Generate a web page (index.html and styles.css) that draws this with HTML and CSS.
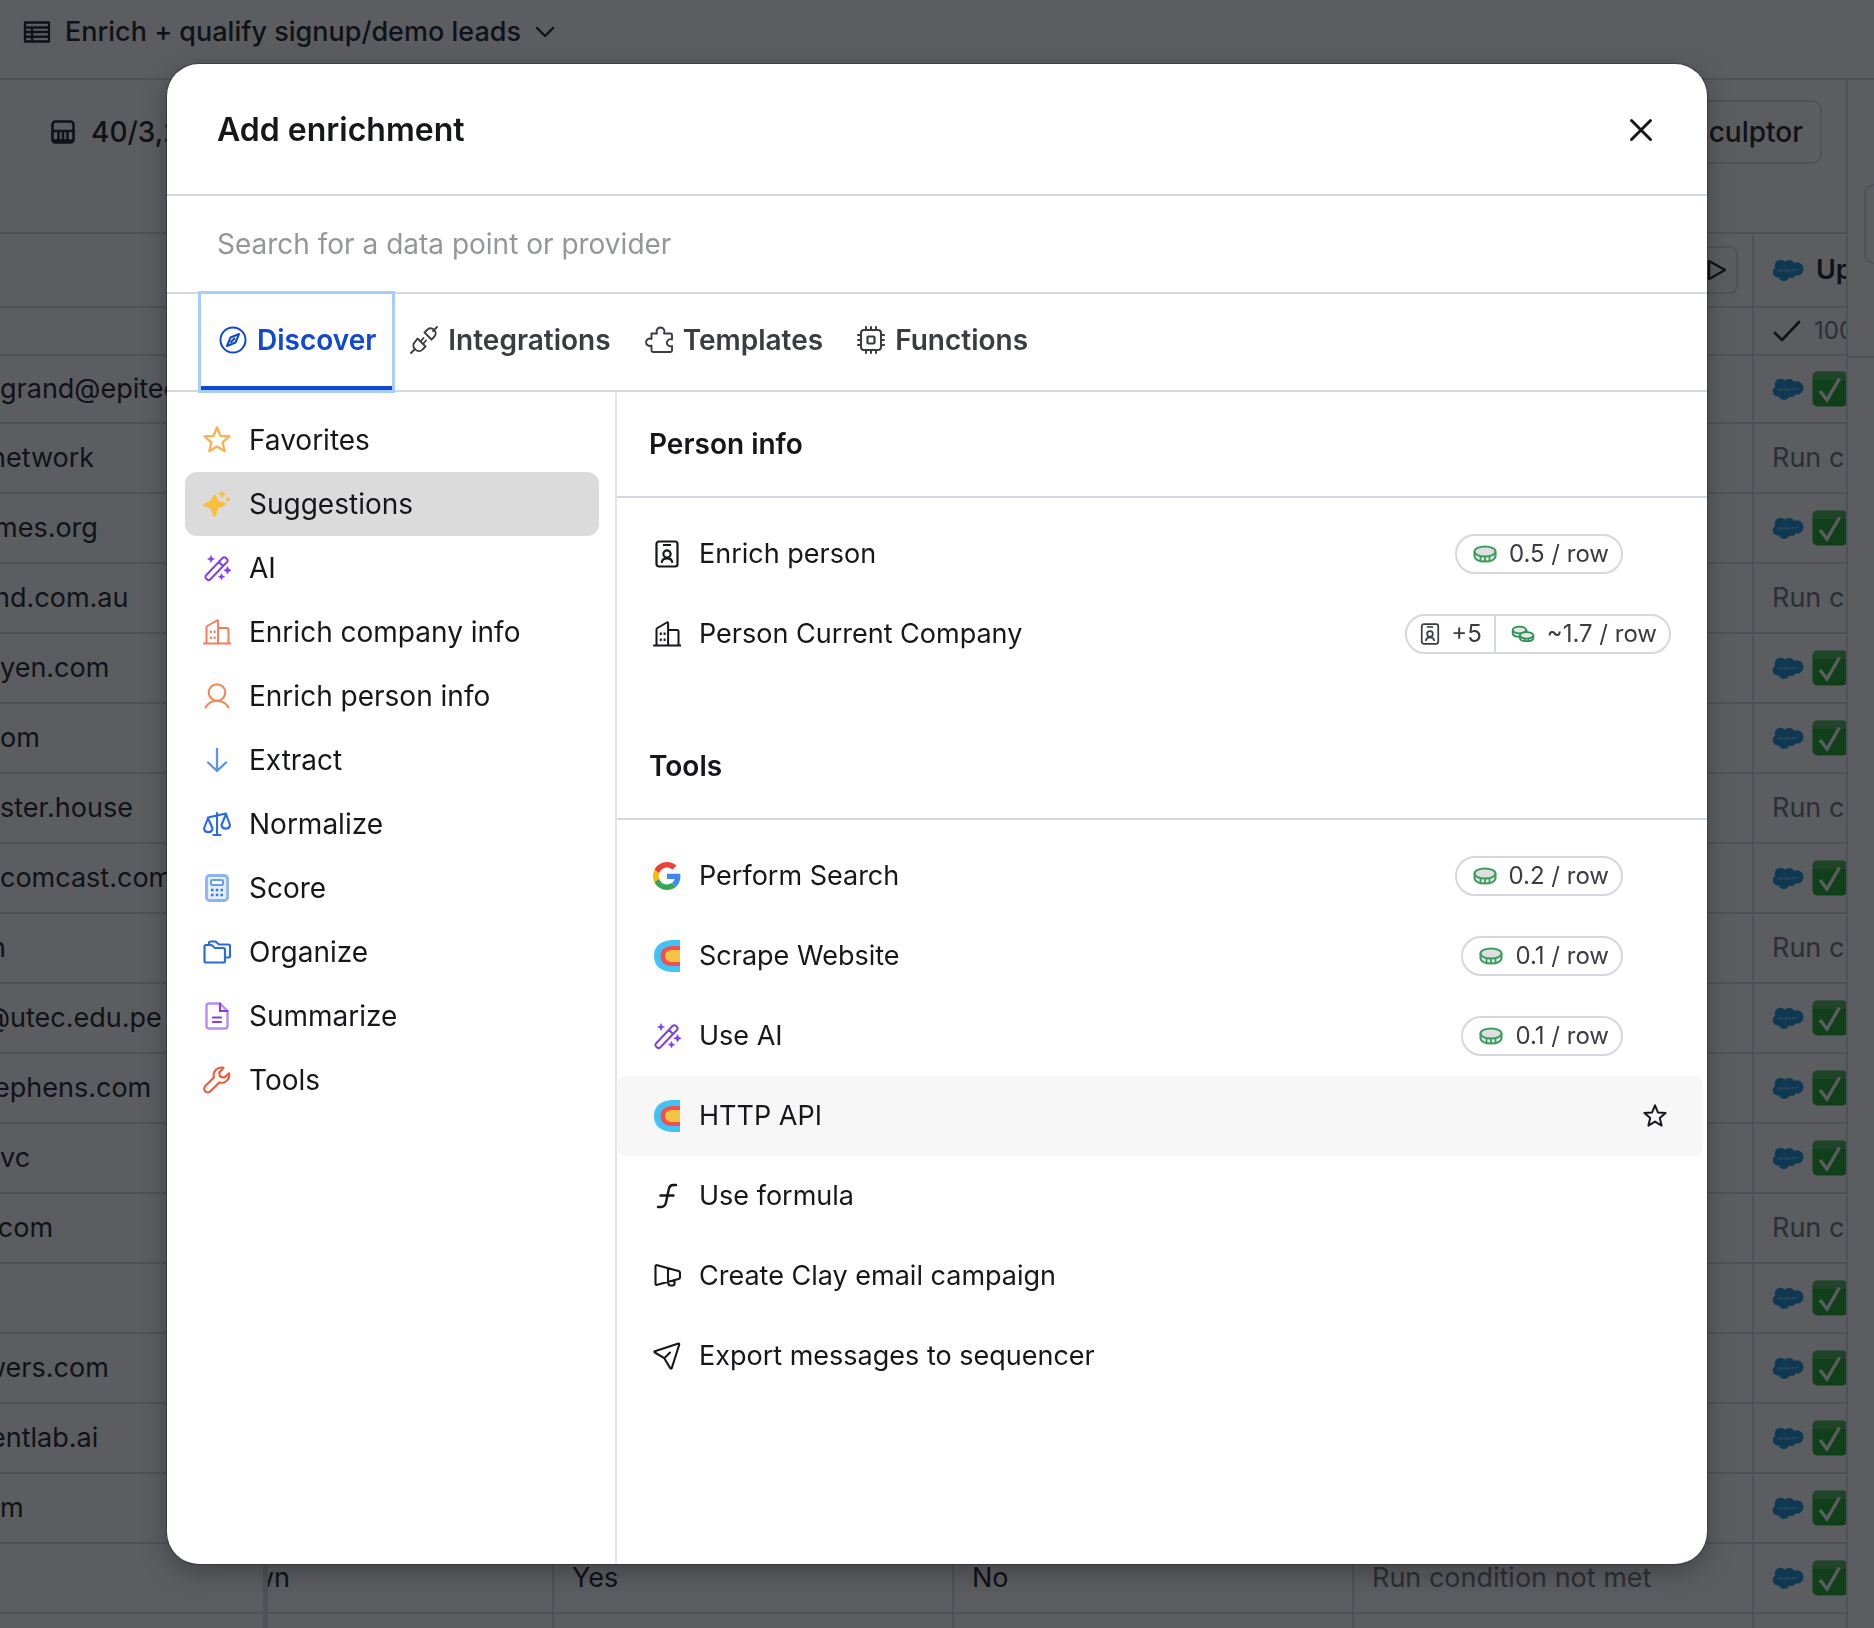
FILE: index.html
```html
<!DOCTYPE html>
<html lang="en">
<head>
<meta charset="utf-8">
<meta name="viewport" content="width=device-width, initial-scale=1">
<title>Add enrichment</title>
<link rel="stylesheet" href="styles.css">
</head>
<body>
<svg class="sprite" aria-hidden="true">
  <symbol id="i-table" viewBox="0 0 28 28"><path d="M2 4.500h24v19H2zM2 9.500h24M2 14h24M2 18.800h24M9 9.500v14" fill="none" stroke="currentColor" stroke-width="2.400" stroke-linejoin="round"/></symbol>
  <symbol id="i-meter" viewBox="0 0 24 24"><rect x="1.500" y="1.500" width="21" height="21" rx="3" fill="none" stroke="currentColor" stroke-width="2.600"/><path d="M1.500 11h21M7.500 11v11M12 11v11M16.500 11v11M2 20.500h20" fill="none" stroke="currentColor" stroke-width="2.600"/></symbol>
  <symbol id="i-chevron" viewBox="0 0 20 20"><path d="M2 6l8 8 8-8" fill="none" stroke="currentColor" stroke-width="2.400" stroke-linecap="round" stroke-linejoin="round"/></symbol>
  <symbol id="i-play" viewBox="0 0 24 24"><path d="M5 3v18l16-9z" fill="none" stroke="currentColor" stroke-width="2.400" stroke-linejoin="round"/></symbol>
  <symbol id="i-check" viewBox="0 0 28 24"><path d="M2 14l7 7L26 3" fill="none" stroke="currentColor" stroke-width="2.600" stroke-linecap="round" stroke-linejoin="round"/></symbol>
  <symbol id="i-cloud" viewBox="0 0 32 23"><path d="M13.300 2.600C14.300 1.500 15.800.9 17.300.9c2.100 0 3.900 1.200 4.900 2.900.8-.4 1.800-.6 2.700-.6 3.700 0 6.600 3 6.600 6.700s-3 6.700-6.600 6.700c-.5 0-.9 0-1.300-.1-.8 1.500-2.500 2.600-4.300 2.600-.8 0-1.500-.2-2.100-.5-.8 2-2.800 3.400-5.100 3.400-2.400 0-4.400-1.500-5.200-3.600-.3.100-.7.100-1.100.1C3 18.500.7 16.100.7 13.300c0-1.900 1-3.600 2.600-4.500-.3-.7-.5-1.500-.5-2.400C2.800 3.200 5.400.7 8.600.7c1.900 0 3.600.8 4.700 1.900z" fill="#1590cf"/><path d="M5 12.500l2-2 1 2.500 2-3 1.500 3M14 9l-1 4 3-2.500 1 2.500 2-3M20 13l1.500-3.500L23 12l2-2 1.500 1" fill="none" stroke="#8ccdf0" stroke-width=".8"/></symbol>
  <symbol id="i-done" viewBox="0 0 36 36"><rect x=".5" y=".5" width="35" height="35" rx="5" fill="#18a422"/><path d="M5.500 1h25q4 0 4.500 4v4H1V5q.5-4 4.500-4z" fill="#49b250"/><path d="M8 20l7 9L27.500 7.500" fill="none" stroke="#fff" stroke-width="3.400"/></symbol>
  <symbol id="i-close" viewBox="0 0 24 24"><path d="M2.500 2.500l19 19M21.500 2.500l-19 19" fill="none" stroke="currentColor" stroke-width="3" stroke-linecap="round"/></symbol>
  <symbol id="i-compass" viewBox="0 0 28 28"><circle cx="14" cy="14" r="12.500" fill="none" stroke="currentColor" stroke-width="2"/><path d="M20 8l-3.500 8.500L8 20l3.500-8.500zM11.500 16.500l4.500-4.500" fill="none" stroke="currentColor" stroke-width="2" stroke-linejoin="round"/></symbol>
  <symbol id="i-plug" viewBox="0 0 28 28"><path d="M1 27l4-4M23 5l4-4M7.500 12.500l8 8-3 3a4.500 4.500 0 01-7 0l-.5-.5a4.500 4.500 0 010-7zM14.500 6.500l7 7 3-3a5 5 0 00-7-7zM10.500 15.500l3-3.500M13 18l3-3.500" fill="none" stroke="currentColor" stroke-width="1.800" stroke-linecap="round" stroke-linejoin="round"/></symbol>
  <symbol id="i-puzzle" viewBox="0 0 28 28"><path d="M6.500 7.500h5.500a4 4 0 11 7 0h6.500a1.500 1.500 0 011.500 1.500v4.500a3.600 3.600 0 100 6.500v4.500a1.500 1.500 0 01-1.500 1.500H8a1.500 1.500 0 01-1.500-1.500V19.500a3.700 3.700 0 11 0-6.500z" fill="none" stroke="currentColor" stroke-width="1.900" stroke-linejoin="round"/></symbol>
  <symbol id="i-chip" viewBox="0 0 28 28"><rect x="4" y="4" width="20" height="20" rx="3" fill="none" stroke="currentColor" stroke-width="2"/><rect x="10.500" y="10.500" width="7" height="7" rx="1" fill="none" stroke="currentColor" stroke-width="2.200"/><path d="M9 1v3M14 1v3M19 1v3M9 24v3M14 24v3M19 24v3M1 9h3M1 14h3M1 19h3M24 9h3M24 14h3M24 19h3" stroke="currentColor" stroke-width="2" stroke-linecap="round"/></symbol>
  <symbol id="i-star" viewBox="0 0 28 28"><path d="M14 1.500l3.400 8.300 9 .7-6.800 5.900 2.100 8.800-7.700-4.700-7.700 4.700 2.100-8.800-6.800-5.900 9-.7z" fill="none" stroke="currentColor" stroke-width="2.300" stroke-linejoin="round"/></symbol>
  <symbol id="i-sparkle" viewBox="0 0 28 28"><path d="M11.500 4.500c.8 0 1.300.4 1.600 1.200l2 4.800 6.800 2.500q2 1.400 0 2.800l-6.800 2.600-2 7q-1.600 3.200-3.200 0l-2.400-7L1 15.900q-2-1.200 0-2.500l6.500-2.700 2.400-5c.3-.8.800-1.200 1.600-1.200zM19 .3l1.400 2.500 2.700 1.300-2.700 1.400L19 8.200l-1.400-2.700-2.700-1.400 2.700-1.300zM25 6.300l1.100 2 2.100 1.100-2.100 1.100-1.100 2.200-1.100-2.200-2.100-1.100 2.100-1.100z" fill="currentColor"/></symbol>
  <symbol id="i-wand" viewBox="0 0 28 28"><g fill="none" stroke="currentColor" stroke-width="2" stroke-linejoin="round" stroke-linecap="round"><path d="M3 21.500L19.500 4a2.500 2.500 0 013.600 0l.7.700a2.500 2.500 0 010 3.500L7.400 25.300a2.500 2.500 0 01-3.500 0l-.9-.9a2 2 0 010-2.900zM16 8l4 4"/></g><path d="M8 1.500l1.100 2.400L11.500 5 9.100 6.100 8 8.500 6.900 6.100 4.500 5l2.400-1.100zM24.500 12.500l1.200 2.600 2.600 1.200-2.600 1.200-1.200 2.600-1.200-2.600-2.600-1.200 2.600-1.200zM18.500 19.500l1 2.200 2.200 1-2.200 1-1 2.200-1-2.200-2.200-1 2.200-1z" fill="currentColor" stroke="currentColor" stroke-width=".5"/></symbol>
  <symbol id="i-building" viewBox="0 0 28 28"><path d="M1 25.500h27M3.500 25V9.500q0-1 .9-1.500l9.500-5.500q1.200-.5 1.200.7V25M15 10h9q1.500 0 1.500 1.500V25" fill="none" stroke="currentColor" stroke-width="2" stroke-linecap="round" stroke-linejoin="round"/><path d="M6.800 12.500h2v2.500h-2zM10.600 12.500h2v2.500h-2zM6.800 18.500h2v2.500h-2zM10.600 18.500h2v2.500h-2z" fill="currentColor"/></symbol>
  <symbol id="i-person" viewBox="0 0 28 28"><circle cx="14" cy="10.500" r="8.300" fill="none" stroke="currentColor" stroke-width="2.100"/><path d="M2.500 25.500q4-6.800 11.500-6.800t11.500 6.800" fill="none" stroke="currentColor" stroke-width="2.100" stroke-linecap="round"/></symbol>
  <symbol id="i-down" viewBox="0 0 28 28"><path d="M14 3v22M5 16.500l9 8.500 9-8.500" fill="none" stroke="currentColor" stroke-width="2.300" stroke-linecap="round" stroke-linejoin="round"/></symbol>
  <symbol id="i-scale" viewBox="0 0 28 28"><path d="M14 3v22M10.500 25h7M5 7.500l18-4M1 18.500L5 8l4.500 10.500a4.300 4.300 0 01-8.500 0zM18.500 15L23 4l4 11a4.300 4.300 0 01-8.500 0z" fill="none" stroke="currentColor" stroke-width="2.100" stroke-linecap="round" stroke-linejoin="round"/></symbol>
  <symbol id="i-calc" viewBox="0 0 28 28"><rect x="3.500" y="1.500" width="21" height="25" rx="3" fill="#e6effd" stroke="#8db4f2" stroke-width="2.800"/><rect x="8" y="6" width="12" height="5" rx="1" fill="#fff" stroke="#6a9cf0" stroke-width="2"/><path d="M8 16h2.500M12.800 16h2.500M17.500 16H20M8 21h2.500M12.800 21h2.500M17.500 21H20" stroke="#3b78e7" stroke-width="2.600"/></symbol>
  <symbol id="i-folders" viewBox="0 0 28 28"><path d="M1.500 8.500q0-1.500 1.500-1.500h5.500l3.500 3h8.500q1.500 0 1.500 1.500V23q0 1.500-1.500 1.500H3q-1.500 0-1.500-1.500zM6 6.500V5q0-1.500 1.500-1.500h5l3.500 3h9.500q1.500 0 1.500 1.500v10q0 1.500-1.500 1.500H23" fill="none" stroke="currentColor" stroke-width="2.200" stroke-linejoin="round"/></symbol>
  <symbol id="i-doc" viewBox="0 0 28 28"><path d="M17 1.500H6q-2.500 0-2.500 2.500v20q0 2.500 2.500 2.500h16q2.500 0 2.500-2.500V9z" fill="none" stroke="#b68cf8" stroke-width="2.400" stroke-linejoin="round"/><path d="M17 1.500V9h7.500M10 15.500h8M10 20h8" fill="none" stroke="currentColor" stroke-width="2.200" stroke-linecap="round"/></symbol>
  <symbol id="i-wrench" viewBox="0 0 28 28"><path d="M20.500 1.800a7.800 7.800 0 00-9.600 9.600L2.300 20a3.600 3.600 0 005.100 5.300l8.800-8.700A7.800 7.800 0 0026 7.300l-5 4.400-4-1.200-.8-3.700z" fill="none" stroke="currentColor" stroke-width="2.100" stroke-linejoin="round"/></symbol>
  <symbol id="i-badge" viewBox="0 0 28 28"><rect x="3.500" y="1.500" width="21" height="25" rx="2.500" fill="none" stroke="currentColor" stroke-width="2.200"/><path d="M10 5h8" stroke="currentColor" stroke-width="2"/><circle cx="14" cy="14" r="3.600" fill="none" stroke="currentColor" stroke-width="2.200"/><path d="M8.800 22q.8-3.600 5.200-3.600t5.200 3.600" fill="none" stroke="currentColor" stroke-width="2.200" stroke-linecap="round"/></symbol>
  <symbol id="i-google" viewBox="0 0 48 48"><path fill="#EA4335" d="M24 9.500c3.540 0 6.710 1.220 9.210 3.600l6.850-6.850C35.900 2.380 30.470 0 24 0 14.620 0 6.510 5.380 2.560 13.220l7.980 6.190C12.430 13.720 17.740 9.500 24 9.500z"/><path fill="#4285F4" d="M46.980 24.550c0-1.570-.15-3.090-.38-4.550H24v9.020h12.940c-.58 2.960-2.260 5.480-4.780 7.180l7.730 6c4.510-4.180 7.090-10.360 7.090-17.650z"/><path fill="#FBBC05" d="M10.530 28.590c-.48-1.450-.76-2.990-.76-4.590s.27-3.140.76-4.590l-7.980-6.190C.92 16.460 0 20.120 0 24c0 3.880.92 7.540 2.560 10.780l7.970-6.190z"/><path fill="#34A853" d="M24 48c6.480 0 11.930-2.130 15.890-5.810l-7.730-6c-2.150 1.450-4.920 2.300-8.160 2.300-6.260 0-11.570-4.220-13.470-9.910l-7.980 6.190C6.510 42.620 14.620 48 24 48z"/></symbol>
  <symbol id="i-clay" viewBox="0 0 28 34"><path d="M27 1v32h-9Q1 31 1 17T18 1z" fill="#3fc3f8"/><path d="M27 7v20h-9Q7.500 26 7.500 17T18 7z" fill="#f0504f"/><path d="M27 11v12h-9q-6-1-6-6t6-6z" fill="#f6c343"/></symbol>
  <symbol id="i-formula" viewBox="0 0 28 28"><path d="M23 3h-2.500q-4 0-4.800 4.500L13 20.500Q12 25 8 25H5M7.500 13.500h13" fill="none" stroke="currentColor" stroke-width="2.400" stroke-linecap="round"/></symbol>
  <symbol id="i-horn" viewBox="0 0 28 28"><path d="M2.500 4.500q0-1.800 1.800-1.300L25.500 9q1.500.5 1.500 2v4q0 1.500-1.500 2L4.300 22.800q-1.800.5-1.800-1.300zM15 6.500V20M15.500 20v1.500q0 2 2 2h2q2 0 2-2v-3.500" fill="none" stroke="currentColor" stroke-width="2.100" stroke-linejoin="round"/></symbol>
  <symbol id="i-send" viewBox="0 0 28 28"><path d="M25.500 1.500L1.800 9.300q-1 .5 0 1.200l9.500 5.700 6 10q.8 1 1.400 0l7.500-23.500q.2-1.400-.7-1.200zM11.500 16l5.500-5.500" fill="none" stroke="currentColor" stroke-width="2.100" stroke-linejoin="round" stroke-linecap="round"/></symbol>
  <symbol id="i-coin" viewBox="0 0 24 18"><path d="M1.500 6.500v5Q2.500 16.500 12 16.500t10.500-5v-5" fill="#dff0e5" stroke="#3d9a5f" stroke-width="2"/><ellipse cx="12" cy="6.500" rx="10.500" ry="5" fill="#dcdfdd" stroke="#3d9a5f" stroke-width="2"/><path d="M7.500 11.500v4.500M12 12v4.500M16.500 11.500v4.500" stroke="#3d9a5f" stroke-width="1.800"/></symbol>
  <symbol id="i-coins" viewBox="0 0 26 20"><path d="M1.500 5.500v4Q2 13 9 13t8-3.500v-4" fill="#dff0e5" stroke="#2f8f55" stroke-width="2"/><ellipse cx="9" cy="5.500" rx="7.500" ry="3.800" fill="#e6e8e7" stroke="#2f8f55" stroke-width="2"/><path d="M9.500 11.500v3Q10 18 17 18t7.500-3.500v-3" fill="#dff0e5" stroke="#2f8f55" stroke-width="2"/><ellipse cx="17" cy="11.500" rx="7.500" ry="3.600" fill="#e6e8e7" stroke="#2f8f55" stroke-width="2"/><path d="M15 15v3M19 15v3" stroke="#2f8f55" stroke-width="1.600"/></symbol>
</svg>

<div class="page">
  <header class="topbar">
    <svg class="icon"><use href="#i-table"/></svg>
    <span class="crumb">Enrich + qualify signup/demo leads</span>
    <svg class="icon-sm"><use href="#i-chevron"/></svg>
  </header>
  <div class="workspace">
    <main class="sheet">
      <div class="toolbar">
        <div class="usage"><svg class="icon-md"><use href="#i-meter"/></svg><span>40/3,2</span></div>
        <button class="outline-btn" type="button">Sculptor</button>
      </div>
      <table class="grid">
        <colgroup><col class="c-email"><col class="c-source"><col class="c-wide"><col class="c-wide"><col class="c-wide"><col></colgroup>
        <thead>
          <tr class="names"><th></th><th></th><th></th><th></th><th><div class="cell end"><button class="run-btn" type="button" aria-label="Run column"><svg class="icon-md"><use href="#i-play"/></svg></button></div></th><th><div class="cell"><svg class="cloud"><use href="#i-cloud"/></svg><span>Up</span></div></th></tr>
          <tr class="stats"><td></td><td></td><td></td><td></td><td></td><td><div class="cell"><svg class="tick"><use href="#i-check"/></svg><span>100</span></div></td></tr>
        </thead>
        <tbody>
          <tr><td>grand@epitec</td><td></td><td></td><td></td><td></td><td><div class="cell"><svg class="cloud"><use href="#i-cloud"/></svg><svg class="done"><use href="#i-done"/></svg></div></td></tr>
          <tr><td class="cut">network</td><td></td><td></td><td></td><td></td><td class="muted">Run c</td></tr>
          <tr><td class="cut-sm">mes.org</td><td></td><td></td><td></td><td></td><td><div class="cell"><svg class="cloud"><use href="#i-cloud"/></svg><svg class="done"><use href="#i-done"/></svg></div></td></tr>
          <tr><td class="cut-sm">nd.com.au</td><td></td><td></td><td></td><td></td><td class="muted">Run c</td></tr>
          <tr><td>yen.com</td><td></td><td></td><td></td><td></td><td><div class="cell"><svg class="cloud"><use href="#i-cloud"/></svg><svg class="done"><use href="#i-done"/></svg></div></td></tr>
          <tr><td>om</td><td></td><td></td><td></td><td></td><td><div class="cell"><svg class="cloud"><use href="#i-cloud"/></svg><svg class="done"><use href="#i-done"/></svg></div></td></tr>
          <tr><td>ster.house</td><td></td><td></td><td></td><td></td><td class="muted">Run c</td></tr>
          <tr><td>comcast.com</td><td></td><td></td><td></td><td></td><td><div class="cell"><svg class="cloud"><use href="#i-cloud"/></svg><svg class="done"><use href="#i-done"/></svg></div></td></tr>
          <tr><td class="cut">n</td><td></td><td></td><td></td><td></td><td class="muted">Run c</td></tr>
          <tr><td class="cut-lg">@utec.edu.pe</td><td></td><td></td><td></td><td></td><td><div class="cell"><svg class="cloud"><use href="#i-cloud"/></svg><svg class="done"><use href="#i-done"/></svg></div></td></tr>
          <tr><td class="cut-sm">ephens.com</td><td></td><td></td><td></td><td></td><td><div class="cell"><svg class="cloud"><use href="#i-cloud"/></svg><svg class="done"><use href="#i-done"/></svg></div></td></tr>
          <tr><td>vc</td><td></td><td></td><td></td><td></td><td><div class="cell"><svg class="cloud"><use href="#i-cloud"/></svg><svg class="done"><use href="#i-done"/></svg></div></td></tr>
          <tr><td class="cut">.com</td><td></td><td></td><td></td><td></td><td class="muted">Run c</td></tr>
          <tr><td></td><td></td><td></td><td></td><td></td><td><div class="cell"><svg class="cloud"><use href="#i-cloud"/></svg><svg class="done"><use href="#i-done"/></svg></div></td></tr>
          <tr><td class="cut-lg">wers.com</td><td></td><td></td><td></td><td></td><td><div class="cell"><svg class="cloud"><use href="#i-cloud"/></svg><svg class="done"><use href="#i-done"/></svg></div></td></tr>
          <tr><td class="cut">entlab.ai</td><td></td><td></td><td></td><td></td><td><div class="cell"><svg class="cloud"><use href="#i-cloud"/></svg><svg class="done"><use href="#i-done"/></svg></div></td></tr>
          <tr><td>m</td><td></td><td></td><td></td><td></td><td><div class="cell"><svg class="cloud"><use href="#i-cloud"/></svg><svg class="done"><use href="#i-done"/></svg></div></td></tr>
          <tr><td></td><td class="cut-lg">wn</td><td>Yes</td><td>No</td><td class="muted">Run condition not met</td><td><div class="cell"><svg class="cloud"><use href="#i-cloud"/></svg><svg class="done"><use href="#i-done"/></svg></div></td></tr>
          <tr><td></td><td></td><td></td><td></td><td></td><td></td></tr>
        </tbody>
      </table>
    </main>
    <aside class="rail"><div class="rail-head"><div class="rail-box"></div></div></aside>
  </div>
</div>

<div class="overlay">
  <section class="modal" role="dialog" aria-modal="true" aria-labelledby="dialog-title">
    <header class="modal-head">
      <h1 id="dialog-title">Add enrichment</h1>
      <button class="plain-btn" type="button" aria-label="Close"><svg class="icon-md"><use href="#i-close"/></svg></button>
    </header>
    <div class="search"><input type="text" aria-label="Search for a data point or provider" placeholder="Search for a data point or provider"></div>
    <div class="tabs" role="tablist">
      <button class="tab active" type="button" role="tab" aria-selected="true"><svg class="icon"><use href="#i-compass"/></svg>Discover</button>
      <button class="tab" type="button" role="tab"><svg class="icon"><use href="#i-plug"/></svg>Integrations</button>
      <button class="tab" type="button" role="tab"><svg class="icon"><use href="#i-puzzle"/></svg>Templates</button>
      <button class="tab" type="button" role="tab"><svg class="icon"><use href="#i-chip"/></svg>Functions</button>
    </div>
    <div class="modal-body">
      <nav class="side">
        <button class="side-item amber" type="button"><svg class="icon"><use href="#i-star"/></svg><span>Favorites</span></button>
        <button class="side-item gold selected" type="button"><svg class="icon"><use href="#i-sparkle"/></svg><span>Suggestions</span></button>
        <button class="side-item violet" type="button"><svg class="icon"><use href="#i-wand"/></svg><span>AI</span></button>
        <button class="side-item coral" type="button"><svg class="icon"><use href="#i-building"/></svg><span>Enrich company info</span></button>
        <button class="side-item orange" type="button"><svg class="icon"><use href="#i-person"/></svg><span>Enrich person info</span></button>
        <button class="side-item sky" type="button"><svg class="icon"><use href="#i-down"/></svg><span>Extract</span></button>
        <button class="side-item blue" type="button"><svg class="icon"><use href="#i-scale"/></svg><span>Normalize</span></button>
        <button class="side-item blue" type="button"><svg class="icon"><use href="#i-calc"/></svg><span>Score</span></button>
        <button class="side-item blue" type="button"><svg class="icon"><use href="#i-folders"/></svg><span>Organize</span></button>
        <button class="side-item violet" type="button"><svg class="icon"><use href="#i-doc"/></svg><span>Summarize</span></button>
        <button class="side-item red" type="button"><svg class="icon"><use href="#i-wrench"/></svg><span>Tools</span></button>
      </nav>
      <div class="results">
        <section class="group">
          <h2>Person info</h2>
          <ul>
            <li class="row"><svg class="icon"><use href="#i-badge"/></svg><span class="name">Enrich person</span><span class="pill"><span class="part"><svg class="coin"><use href="#i-coin"/></svg>0.5 / row</span></span><span class="fav"></span></li>
            <li class="row"><svg class="icon"><use href="#i-building"/></svg><span class="name">Person Current Company</span><span class="pill"><span class="part tight"><svg class="mini"><use href="#i-badge"/></svg>+5</span><span class="part"><svg class="coin"><use href="#i-coins"/></svg>~1.7 / row</span></span></li>
          </ul>
        </section>
        <section class="group">
          <h2>Tools</h2>
          <ul>
            <li class="row"><svg class="icon"><use href="#i-google"/></svg><span class="name">Perform Search</span><span class="pill"><span class="part"><svg class="coin"><use href="#i-coin"/></svg>0.2 / row</span></span><span class="fav"></span></li>
            <li class="row"><svg class="icon tall"><use href="#i-clay"/></svg><span class="name">Scrape Website</span><span class="pill"><span class="part"><svg class="coin"><use href="#i-coin"/></svg>0.1 / row</span></span><span class="fav"></span></li>
            <li class="row"><svg class="icon wand"><use href="#i-wand"/></svg><span class="name">Use AI</span><span class="pill"><span class="part"><svg class="coin"><use href="#i-coin"/></svg>0.1 / row</span></span><span class="fav"></span></li>
            <li class="row hovered"><svg class="icon tall"><use href="#i-clay"/></svg><span class="name">HTTP API</span><button class="fav" type="button" aria-label="Add to favorites"><svg class="star"><use href="#i-star"/></svg></button></li>
            <li class="row"><svg class="icon"><use href="#i-formula"/></svg><span class="name">Use formula</span></li>
            <li class="row"><svg class="icon"><use href="#i-horn"/></svg><span class="name">Create Clay email campaign</span></li>
            <li class="row"><svg class="icon"><use href="#i-send"/></svg><span class="name">Export messages to sequencer</span></li>
          </ul>
        </section>
      </div>
    </div>
  </section>
</div>
</body>
</html>
```
FILE: styles.css
```css
* { box-sizing: border-box; }

body {
  margin: 0;
  height: 100vh;
  overflow: hidden;
  font-family: Inter, "Liberation Sans", sans-serif;
  font-size: 28px;
  line-height: 36px;
  color: #16171b;
  background: #fff;
}

button, input { font: inherit; color: inherit; }
button { border: 0; padding: 0; background: none; cursor: pointer; }
h1, h2, ul { margin: 0; padding: 0; }
ul { list-style: none; }
svg { display: block; flex: none; }

.sprite { position: absolute; width: 0; height: 0; }
.icon { width: 28px; height: 28px; }
.icon-md { width: 24px; height: 24px; }
.icon-sm { width: 20px; height: 20px; }

/* Sheet behind the dialog */
.page { height: 100vh; display: flex; flex-direction: column; overflow: hidden; }
.topbar {
  display: flex;
  align-items: center;
  gap: 14px;
  height: 80px;
  padding: 0 23px 14px;
  border-bottom: 2px solid #dadbe0;
  flex: none;
  font-size: 27px;
  font-weight: 500;
}
.workspace { display: flex; flex: 1; min-height: 0; }
.sheet { flex: 1; min-width: 0; overflow: hidden; }
.toolbar {
  display: flex;
  justify-content: space-between;
  align-items: flex-start;
  height: 154px;
  padding: 20px 24px 0 51px;
  border-bottom: 2px solid #dadbe0;
  font-weight: 500;
}
.usage { display: flex; align-items: center; gap: 16px; height: 64px; }
.outline-btn {
  height: 64px;
  padding: 0 17px;
  border: 2px solid #dadbe0;
  border-radius: 10px;
  font-weight: 500;
}

.grid { width: 100%; table-layout: fixed; border-collapse: separate; border-spacing: 0; font-size: 27px; }
.c-email { width: 268px; }
.c-source { width: 286px; }
.c-wide { width: 400px; }
.grid th, .grid td {
  height: 70px;
  padding: 0 0 0 18px;
  border-right: 2px solid #dadbe0;
  border-bottom: 2px solid #dadbe0;
  text-align: left;
  font-weight: 400;
  white-space: nowrap;
  overflow: hidden;
}
.grid tr > :first-child { padding-left: 0; border-right-width: 5px; }
.grid tr > :last-child { border-right: 0; }
.grid .names th { height: 74px; font-weight: 600; }
.grid .stats td { height: 48px; font-size: 24px; color: #6f7178; }
.grid tbody tr:first-child td { height: 68px; }
.grid .cut-sm { padding-left: 0; text-indent: -6px; }
.grid .cut { padding-left: 0; text-indent: -10px; }
.grid .cut-lg { padding-left: 0; text-indent: -16px; }
.grid .muted { color: #6f7178; }
.cell { display: flex; align-items: center; gap: 8px; }
.cell.end { justify-content: flex-end; padding-right: 14px; }
.names .cell, .stats .cell { gap: 12px; }
.cloud { width: 32px; height: 23px; }
.done { width: 36px; height: 36px; }
.tick { width: 30px; height: 24px; color: #16171b; }
.run-btn {
  display: grid;
  place-items: center end;
  width: 64px;
  height: 48px;
  padding-right: 8px;
  border: 2px solid #dadbe0;
  border-radius: 8px;
}

.rail { width: 28px; border-left: 2px solid #dadbe0; overflow: hidden; }
.rail-head { height: 278px; padding: 104px 0 0 16px; border-bottom: 2px solid #dadbe0; }
.rail-box { width: 80px; height: 80px; border: 2px solid #dadbe0; border-radius: 10px; }

/* Dialog */
.overlay {
  position: fixed;
  inset: 0;
  display: flex;
  padding: 64px 167px;
  background: rgba(14, 16, 22, .68);
}
.modal {
  flex: 1;
  min-width: 0;
  display: flex;
  flex-direction: column;
  overflow: hidden;
  border-radius: 32px;
  background: #fff;
  box-shadow: 0 0 0 1px rgba(40, 42, 48, .5), 0 8px 28px rgba(0, 0, 0, .3);
}
.modal-head {
  display: flex;
  align-items: center;
  justify-content: space-between;
  height: 132px;
  padding: 2px 54px 0 50px;
  border-bottom: 2px solid #d5d8e0;
  flex: none;
}
.modal-head h1 { font-size: 32px; line-height: 40px; font-weight: 600; }
.search { height: 98px; border-bottom: 2px solid #d5d8e0; flex: none; }
.search input {
  width: 100%;
  height: 96px;
  padding: 0 50px;
  border: 0;
  outline: 0;
  background: none;
}
.search input::placeholder { color: #94969b; opacity: 1; }
.tabs {
  display: flex;
  height: 98px;
  padding-left: 34px;
  border-bottom: 2px solid #d5d8e0;
  flex: none;
}
.tab {
  display: flex;
  align-items: center;
  gap: 10px;
  padding: 0 16px 4px 18px;
  font-weight: 600;
  color: #3a3c42;
}
.tab.active {
  padding-bottom: 0;
  border-bottom: 4px solid #1048d3;
  outline: 3px solid #a9cdfb;
  color: #1048d3;
}

.modal-body { display: flex; flex: 1; min-height: 0; }
.side {
  width: 450px;
  padding: 16px 16px 16px 18px;
  border-right: 2px solid #e4e6ec;
  flex: none;
}
.side-item {
  display: flex;
  align-items: center;
  gap: 18px;
  width: 100%;
  height: 64px;
  padding: 0 18px;
  border-radius: 12px;
}
.side-item span { color: #16171b; }
.side-item.selected { background: #dbdbdb; }
.amber { color: #f7b252; }
.gold { color: #f9c03d; }
.violet, .wand { color: #8040ee; }
.coral { color: #f47b5c; }
.orange { color: #f5864f; }
.sky { color: #5b93ee; }
.blue { color: #2b6be0; }
.red { color: #f0583a; }

.results { flex: 1; min-width: 0; }
.group { padding-bottom: 40px; }
.group + .group { padding-bottom: 0; }
.group h2 {
  height: 106px;
  padding: 34px 32px;
  border-bottom: 2px solid #d5d8e0;
  font-size: 28px;
  line-height: 36px;
  font-weight: 600;
}
.group ul { padding: 16px 4px 0 0; }
.row {
  display: flex;
  align-items: center;
  height: 80px;
  padding: 0 32px 0 36px;
  border-radius: 8px;
}
.row.hovered { background: #f7f7f8; }
.row .name { flex: 1; padding-left: 18px; font-size: 27px; }
.icon.tall { height: 34px; }
.pill {
  display: flex;
  height: 40px;
  border: 2px solid #d5d8e0;
  border-radius: 20px;
  font-size: 24px;
  line-height: 36px;
  color: #3a3c42;
}
.part { display: flex; align-items: center; gap: 12px; padding: 0 12px 0 16px; }
.part + .part { border-left: 2px solid #d5d8e0; padding-left: 15px; }
.part.tight { padding: 0 12px; gap: 10px; }
.coin { width: 24px; height: 18px; }
.mini { width: 22px; height: 22px; }
.fav { display: grid; place-items: center; width: 32px; height: 32px; margin-left: 16px; }
.star { width: 24px; height: 24px; }
```
